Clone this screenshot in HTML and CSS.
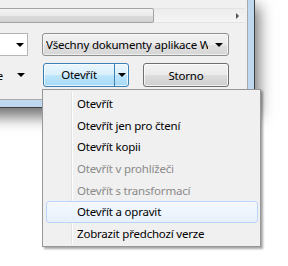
FILE: index.html
```html
<!DOCTYPE html>
<html lang="cs">
<head>
  <meta charset="UTF-8" />
  <meta name="viewport" content="width=device-width, initial-scale=1.0"/>
  <title>Otevřít</title>
  <link rel="stylesheet" href="styles.css">
</head>
<body>
  <div class="window">
    <div class="dialog">
      <div class="hscroll">
        <div class="thumb"></div>
        <span class="arrow-right"></span>
      </div>

      <div class="row row-combos">
        <div class="combo-name"><span class="arrow-down"></span></div>
        <div class="combo-filter">
          <span class="combo-label">Všechny dokumenty aplikace Word</span>
          <span class="arrow-down"></span>
        </div>
      </div>

      <div class="row row-buttons">
        <div class="tools">
          <span class="tools-label">Nástroje</span>
          <span class="arrow-down"></span>
        </div>
        <div class="btn btn-split">
          <span class="btn-main">Otevřít</span>
          <span class="btn-drop"><span class="arrow-down"></span></span>
        </div>
        <div class="btn">Storno</div>
      </div>
    </div>
  </div>

  <ul class="menu">
    <li class="item">Otevřít</li>
    <li class="item">Otevřít jen pro čtení</li>
    <li class="item">Otevřít kopii</li>
    <li class="item disabled">Otevřít v prohlížeči</li>
    <li class="item disabled">Otevřít s transformací</li>
    <li class="item hover">Otevřít a opravit</li>
    <li class="item">Zobrazit předchozí verze</li>
  </ul>
</body>
</html>
```

FILE: styles.css
```css
html, body {
  margin: 0;
  padding: 0;
}

body {
  width: 288px;
  height: 266px;
  overflow: hidden;
  position: relative;
  background: #fff;
  font-family: "Noto Sans", "Segoe UI", sans-serif;
  font-size: 11.5px;
  letter-spacing: -0.2px;
  color: #000;
}

.window {
  width: 374px;
  margin-left: -120px;
  box-sizing: border-box;
  border-right: 6px solid #bfd7ef;
  border-bottom: 7px solid #bfd7ef;
  box-shadow: 0 0 0 1px #3e3e3e, 3px 8px 14px 2px rgba(0, 0, 0, 0.55);
}

.dialog {
  background: #f0f0f0;
  border-right: 1px solid #a9a9a9;
  border-bottom: 1px solid #a9a9a9;
  padding: 8px 18px 12px 0;
}

/* vodorovný posuvník */
.hscroll {
  height: 15px;
  margin-right: -16px;
  display: flex;
  align-items: center;
  box-sizing: border-box;
  border-top: 1px solid #e3e3e3;
  border-bottom: 1px solid #e3e3e3;
  background: linear-gradient(#ececec, #f4f4f4);
}

.thumb {
  width: 274px;
  height: 15px;
  box-sizing: border-box;
  border: 1px solid #a3a3a3;
  border-radius: 2px;
  background: linear-gradient(#f4f4f4 0%, #e9e9e9 50%, #dcdcdc 51%, #d2d2d2 100%);
}

.arrow-right {
  width: 0;
  height: 0;
  margin-left: auto;
  margin-right: 6px;
  border-top: 3px solid transparent;
  border-bottom: 3px solid transparent;
  border-left: 3px solid #505050;
}

.arrow-down {
  width: 0;
  height: 0;
  border-left: 4px solid transparent;
  border-right: 4px solid transparent;
  border-top: 4px solid #000;
}

.row {
  display: flex;
  gap: 14px;
}

.row-combos {
  margin-top: 10px;
  height: 23px;
}

.row-buttons {
  margin-top: 7px;
  height: 24px;
}

.combo-name {
  flex: 1;
  display: flex;
  align-items: center;
  justify-content: flex-end;
  padding-right: 3px;
  background: #fff;
  border: 1px solid #b5b5b5;
  border-left: none;
}

.combo-filter {
  width: 187px;
  box-sizing: border-box;
  display: flex;
  align-items: center;
  padding: 0 5px 0 3px;
  border: 1px solid #8e8f8f;
  border-radius: 3px;
  background: linear-gradient(#f2f2f2 0%, #ebebeb 50%, #e0e0e0 51%, #d6d6d6 100%);
  box-shadow: inset 0 0 0 1px rgba(255, 255, 255, 0.6);
}

.combo-label {
  flex: 1;
  overflow: hidden;
  white-space: nowrap;
  margin-right: 7px;
}

.tools {
  flex: 1;
  display: flex;
  align-items: center;
  justify-content: flex-end;
  padding-right: 4px;
}

.tools-label {
  margin-right: 14px;
}

.btn {
  width: 86px;
  box-sizing: border-box;
  display: flex;
  align-items: center;
  justify-content: center;
  border: 1px solid #707070;
  border-radius: 3px;
  background: linear-gradient(#f2f2f2 0%, #ebebeb 50%, #dddddd 51%, #cfcfcf 100%);
  box-shadow: inset 0 0 0 1px rgba(255, 255, 255, 0.7);
}

.btn-split {
  justify-content: stretch;
  border-color: #3c7fb1;
  background: linear-gradient(#eaf6fd 0%, #d9f0fc 50%, #bee6fd 51%, #a7d9f5 100%);
}

.btn-main {
  flex: 1;
  text-align: center;
  align-self: center;
  border-right: 1px solid #3c7fb1;
  line-height: 22px;
}

.btn-drop {
  width: 13px;
  display: flex;
  align-items: center;
  justify-content: center;
}

/* rozbalovací nabídka tlačítka Otevřít */
.menu {
  position: absolute;
  left: 42px;
  top: 89px;
  width: 219px;
  height: 158px;
  box-sizing: border-box;
  margin: 0;
  padding: 3px 0;
  list-style: none;
  background: #f0f0f0;
  border: 1px solid #979797;
  box-shadow: 2px 2px 2px rgba(0, 0, 0, 0.35);
}

.menu::before {
  content: "";
  position: absolute;
  left: 28px;
  top: 2px;
  bottom: 2px;
  width: 1px;
  background: #e2e3e3;
  border-right: 1px solid #fff;
}

.item {
  position: relative;
  height: 21.67px;
  line-height: 19.67px;
  box-sizing: border-box;
  margin: 0 2px 0 3px;
  padding-left: 30px;
  border: 1px solid transparent;
  border-radius: 3px;
  white-space: nowrap;
}

.disabled {
  color: #8a8a8a;
}

.hover {
  border-color: #b8d6fb;
  background: linear-gradient(#f5f9fe, #e6f0fc);
}
```
